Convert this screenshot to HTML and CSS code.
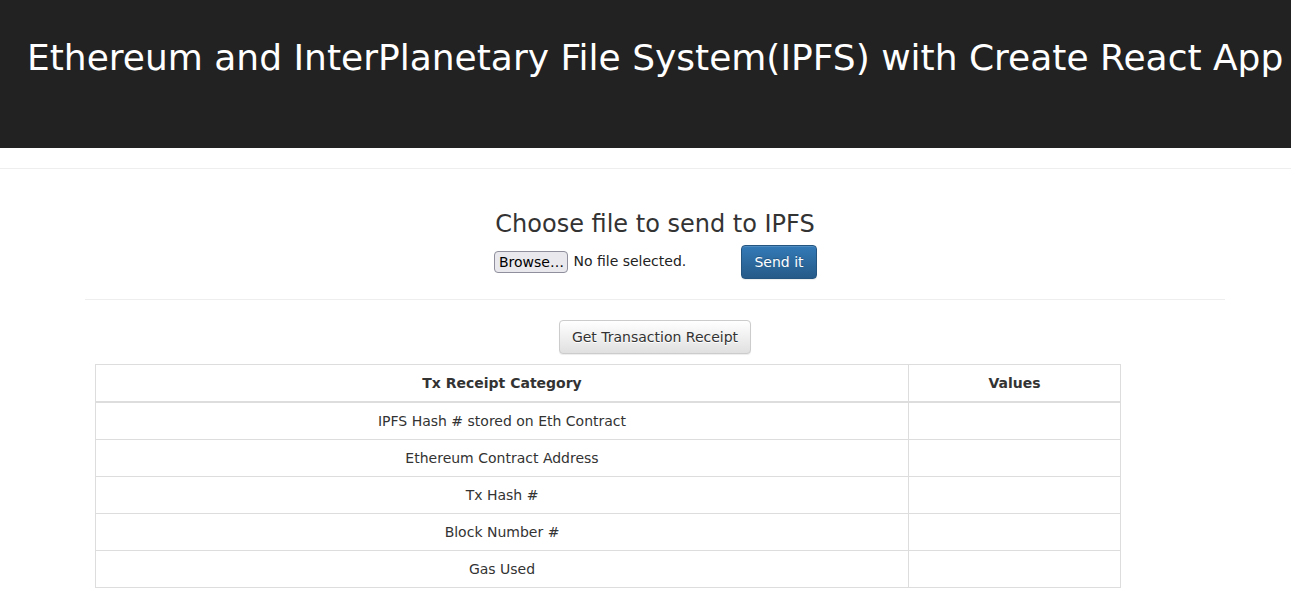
FILE: index.html
```html
<!DOCTYPE html>
<html>
<head>
<meta charset="utf-8">
<link rel="stylesheet" href="styles.css">
</head>
<body>
<header class="app-header">
  <h1 class="app-title">Ethereum and InterPlanetary File System(IPFS) with Create React App</h1>
</header>
<hr class="top-rule">
<main class="container">
  <h3 class="choose-title">Choose file to send to IPFS</h3>
  <form class="upload-form">
    <span class="file-input">
      <span class="browse-btn">Browse…</span>
      <span class="file-label">No file selected.</span>
    </span>
    <button type="button" class="btn btn-primary">Send it</button>
  </form>
  <hr class="mid-rule">
  <div class="receipt-row">
    <button type="button" class="btn btn-default">Get Transaction Receipt</button>
  </div>
  <table class="receipt-table">
    <thead>
      <tr><th class="col-cat">Tx Receipt Category</th><th class="col-val">Values</th></tr>
    </thead>
    <tbody>
      <tr><td>IPFS Hash # stored on Eth Contract</td><td></td></tr>
      <tr><td>Ethereum Contract Address</td><td></td></tr>
      <tr><td>Tx Hash # </td><td></td></tr>
      <tr><td>Block Number # </td><td></td></tr>
      <tr><td>Gas Used</td><td></td></tr>
    </tbody>
  </table>
</main>
</body>
</html>
```

FILE: styles.css
```css
html, body {
  margin: 0;
  padding: 0;
}
body {
  font-family: "DejaVu Sans", sans-serif;
  font-size: 14px;
  line-height: 1.42857;
  color: #333;
  background: #fff;
  overflow-x: hidden;
}
.app-header {
  background: #222;
  height: 148px;
  box-sizing: border-box;
  padding: 38px 0 0 27px;
  display: flex;
  justify-content: flex-start;
}
.app-title {
  margin: 0;
  font-size: 36px;
  font-weight: 400;
  line-height: 1.1;
  color: #fff;
  white-space: nowrap;
}
.top-rule {
  margin: 20px 0 0;
  border: 0;
  border-top: 1px solid #eee;
}
.container {
  width: 1140px;
  margin: 0 0 0 85px;
  display: flex;
  flex-direction: column;
  align-items: center;
}
.choose-title {
  margin: 42px 0 0;
  font-size: 24px;
  font-weight: 400;
  line-height: 1.1;
  color: #333;
}
.upload-form {
  display: flex;
  align-items: center;
  margin-top: 8px;
  margin-left: 1px;
}
.file-input {
  display: flex;
  align-items: center;
  width: 247px;
}
.browse-btn {
  display: inline-flex;
  align-items: center;
  justify-content: center;
  box-sizing: border-box;
  height: 22px;
  width: 74px;
  padding: 0;
  font-size: 14px;
  line-height: 20px;
  color: #000;
  background: #e9e9ed;
  border: 1px solid #8f8f9d;
  border-radius: 4px;
}
.file-label {
  margin-left: 5px;
  font-size: 14px;
  color: #222;
}
.btn {
  font-family: inherit;
  font-size: 14px;
  line-height: 20px;
  padding: 6px 12px;
  border-radius: 4px;
  border: 1px solid transparent;
  cursor: pointer;
}
.btn-primary {
  color: #fff;
  background-image: linear-gradient(to bottom, #337ab7 0, #265a88 100%);
  border-color: #245580;
  box-shadow: inset 0 1px 0 rgba(255,255,255,.15), 0 1px 1px rgba(0,0,0,.075);
  text-shadow: 0 -1px 0 rgba(0,0,0,.2);
}
.btn-default {
  color: #333;
  background-image: linear-gradient(to bottom, #fff 0, #e0e0e0 100%);
  border-color: #ccc;
  box-shadow: inset 0 1px 0 rgba(255,255,255,.15), 0 1px 1px rgba(0,0,0,.075);
  text-shadow: 0 1px 0 #fff;
}
.mid-rule {
  align-self: stretch;
  margin: 20px 0 0;
  border: 0;
  border-top: 1px solid #eee;
}
.receipt-row {
  margin-top: 20px;
}
.receipt-table {
  align-self: flex-start;
  margin: 10px 0 0 10px;
  width: 1026px;
  border-collapse: collapse;
  border: 1px solid #ddd;
}
.receipt-table th,
.receipt-table td {
  border: 1px solid #ddd;
  padding: 8px;
  text-align: center;
  line-height: 20px;
  height: 20px;
}
.receipt-table th {
  font-weight: 700;
  border-bottom: 2px solid #ddd;
}
.col-cat {
  width: 796px;
}
```
